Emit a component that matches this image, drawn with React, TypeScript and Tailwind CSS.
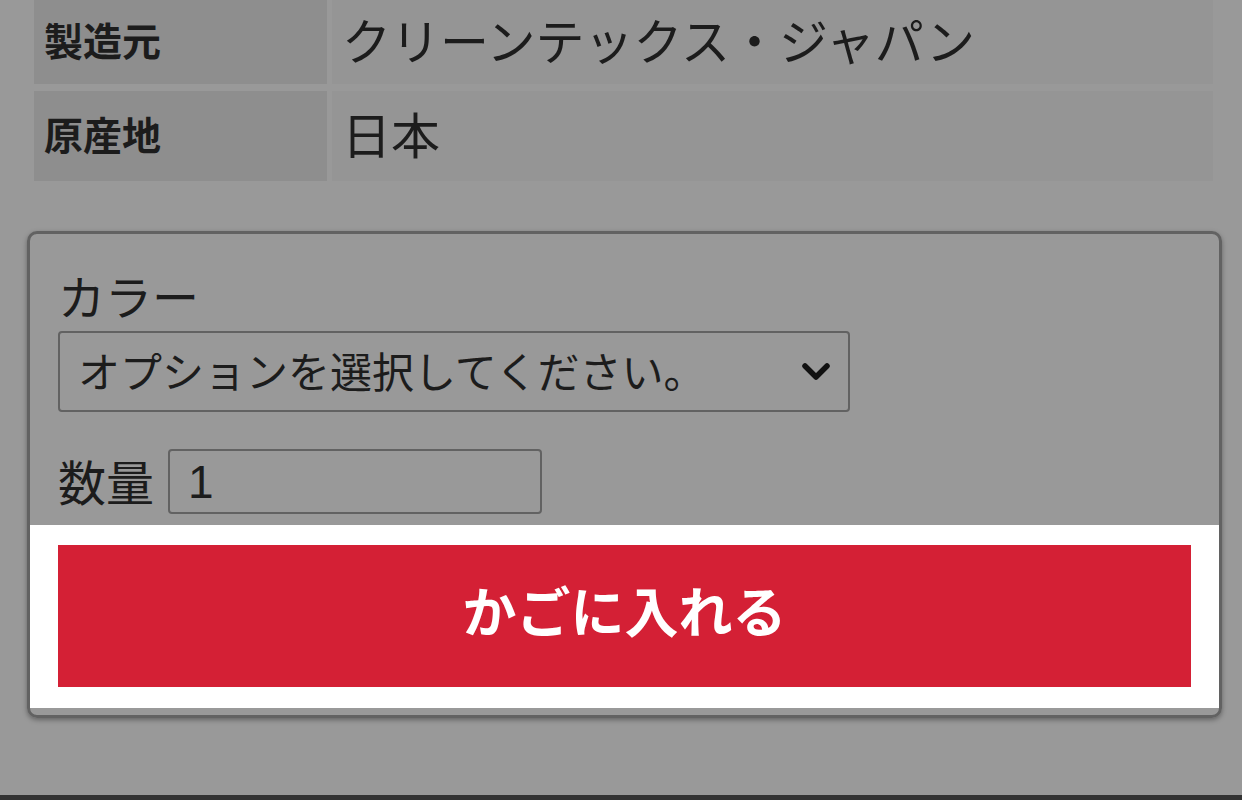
import React from "react";

export default function App() {
  const jp = "font-['Noto_Sans_CJK_JP','Noto_Sans',sans-serif]";
  return (
    <div className={`w-[1242px] h-[800px] bg-[#999999] flex flex-col overflow-hidden ${jp} text-[#1c1c1c]`}>
      {/* spec table */}
      <div className="ml-[34px] w-[1179px] flex flex-col gap-[7px]">
        <div className="flex gap-[5px] h-[84px]">
          <div className="w-[293px] bg-[#8e8e8e] flex items-center pl-[10px] pb-[6px] text-[39px] font-bold leading-none">製造元</div>
          <div className="flex-1 bg-[#959595] flex items-center pl-[10px] pb-[8px] text-[49px] leading-none">クリーンテックス・ジャパン</div>
        </div>
        <div className="flex gap-[5px] h-[90px]">
          <div className="w-[293px] bg-[#8e8e8e] flex items-center pl-[10px] pb-[6px] text-[39px] font-bold leading-none">原産地</div>
          <div className="flex-1 bg-[#959595] flex items-center pl-[10px] pb-[8px] text-[49px] leading-none">日本</div>
        </div>
      </div>

      {/* cart box */}
      <div className="mt-[50px] ml-[27px] w-[1195px] h-[487px] border-[3px] border-[#626262] rounded-[10px] shadow-[0_2px_5px_rgba(0,0,0,0.35)] flex flex-col">
        <div className="px-[28px] pt-[37px]">
          <div className="text-[47px] leading-none h-[47px]">カラー</div>
          <div className="mt-[13px] w-[792px] h-[81px] border-2 border-[#626262] rounded-[4px] flex items-center pl-[18px] pr-[16px] pb-[4px]">
            <span className="flex-1 text-[42px] leading-none">オプションを選択してください。</span>
            <svg width="32" height="22" viewBox="0 0 32 22" className="mt-[4px]">
              <polyline points="5,5 16,16 27,5" fill="none" stroke="#111" strokeWidth="5.5" strokeLinecap="round" strokeLinejoin="round" />
            </svg>
          </div>
          <div className="mt-[37px] flex items-center h-[65px]">
            <span className="text-[48px] leading-none pb-[4px]">数量</span>
            <div className="ml-[14px] w-[374px] h-[65px] border-2 border-[#626262] rounded-[4px] flex items-center pl-[18px]">
              <span className="font-['Liberation_Sans',sans-serif] text-[46px] leading-none">1</span>
            </div>
          </div>
        </div>
        <div className="mt-[11px] bg-white h-[183px] px-[28px] pt-[20px]">
          <button className="w-full h-[142px] bg-[#d42035] text-white font-bold text-[54px] leading-none flex items-center justify-center pb-[12px]">
            かごに入れる
          </button>
        </div>
      </div>

      <div className="mt-auto h-[5px] bg-[#333333]" />
    </div>
  );
}
